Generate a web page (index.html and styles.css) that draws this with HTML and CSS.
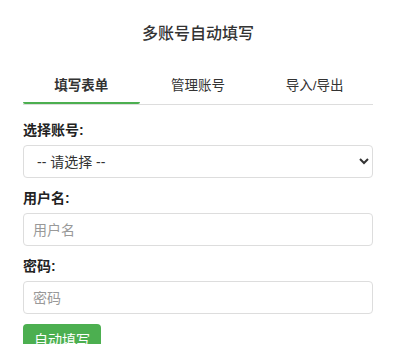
FILE: index.html
```
<!DOCTYPE html>
<html lang="zh-CN">

<head>
	<meta charset="UTF-8">
	<title>多账号自动填写</title>
	<link rel="stylesheet" href="styles.css">
</head>

<body>
	<div class="app">
		<h1>多账号自动填写</h1>
		<div class="tabs">
			<button class="tab active">填写表单</button>
			<button class="tab">管理账号</button>
			<button class="tab">导入/导出</button>
		</div>
		<div class="tab-content">
			<div class="form-group">
				<label for="account-select">选择账号:</label>
				<select id="account-select">
					<option value="">-- 请选择 --</option>
				</select>
			</div>
			<div class="form-group">
				<label for="username">用户名:</label>
				<input type="text" id="username" placeholder="用户名">
			</div>
			<div class="form-group">
				<label for="password">密码:</label>
				<input type="password" id="password" placeholder="密码">
			</div>
			<button class="fill-button">自动填写</button>
		</div>
	</div>
</body>

</html>
```

FILE: styles.css
```
body {
	font-family: "Liberation Sans", "Noto Sans CJK SC", sans-serif;
	margin: 0;
	padding: 0;
	background-color: #ffffff;
	color: #333;
}

.app {
	padding: 24px 23px 0;
}

h1 {
	text-align: center;
	font-size: 16px;
	font-weight: 500;
	line-height: 20px;
	margin: 0 0 26px;
	color: #333;
}

.tabs {
	display: flex;
	border-bottom: 1px solid #ddd;
	margin-bottom: 15px;
}

.tab {
	flex: 1;
	font-family: inherit;
	font-size: 13.5px;
	line-height: 16px;
	padding: 8px 0;
	color: #333;
	background: transparent;
	border: none;
	border-bottom: 2px solid transparent;
	border-radius: 2px;
	cursor: pointer;
}

.tab.active {
	border-bottom-color: #4CAF50;
	font-weight: bold;
}

.form-group {
	margin-bottom: 10px;
}

.form-group label {
	display: block;
	font-size: 14px;
	font-weight: bold;
	line-height: 20px;
	margin-bottom: 5px;
	color: #222;
}

.form-group select,
.form-group input {
	display: block;
	width: 100%;
	box-sizing: border-box;
	height: 33px;
	padding: 0 9px;
	font-family: inherit;
	font-size: 14px;
	color: #333;
	border: 1px solid #ddd;
	border-radius: 4px;
	background: #fff;
}

.form-group input::placeholder {
	color: #999;
}

.fill-button {
	font-family: inherit;
	font-size: 14px;
	line-height: 17px;
	padding: 8px 11px;
	background: #4CAF50;
	color: #ffffff;
	border: none;
	border-radius: 4px;
	cursor: pointer;
}
```
